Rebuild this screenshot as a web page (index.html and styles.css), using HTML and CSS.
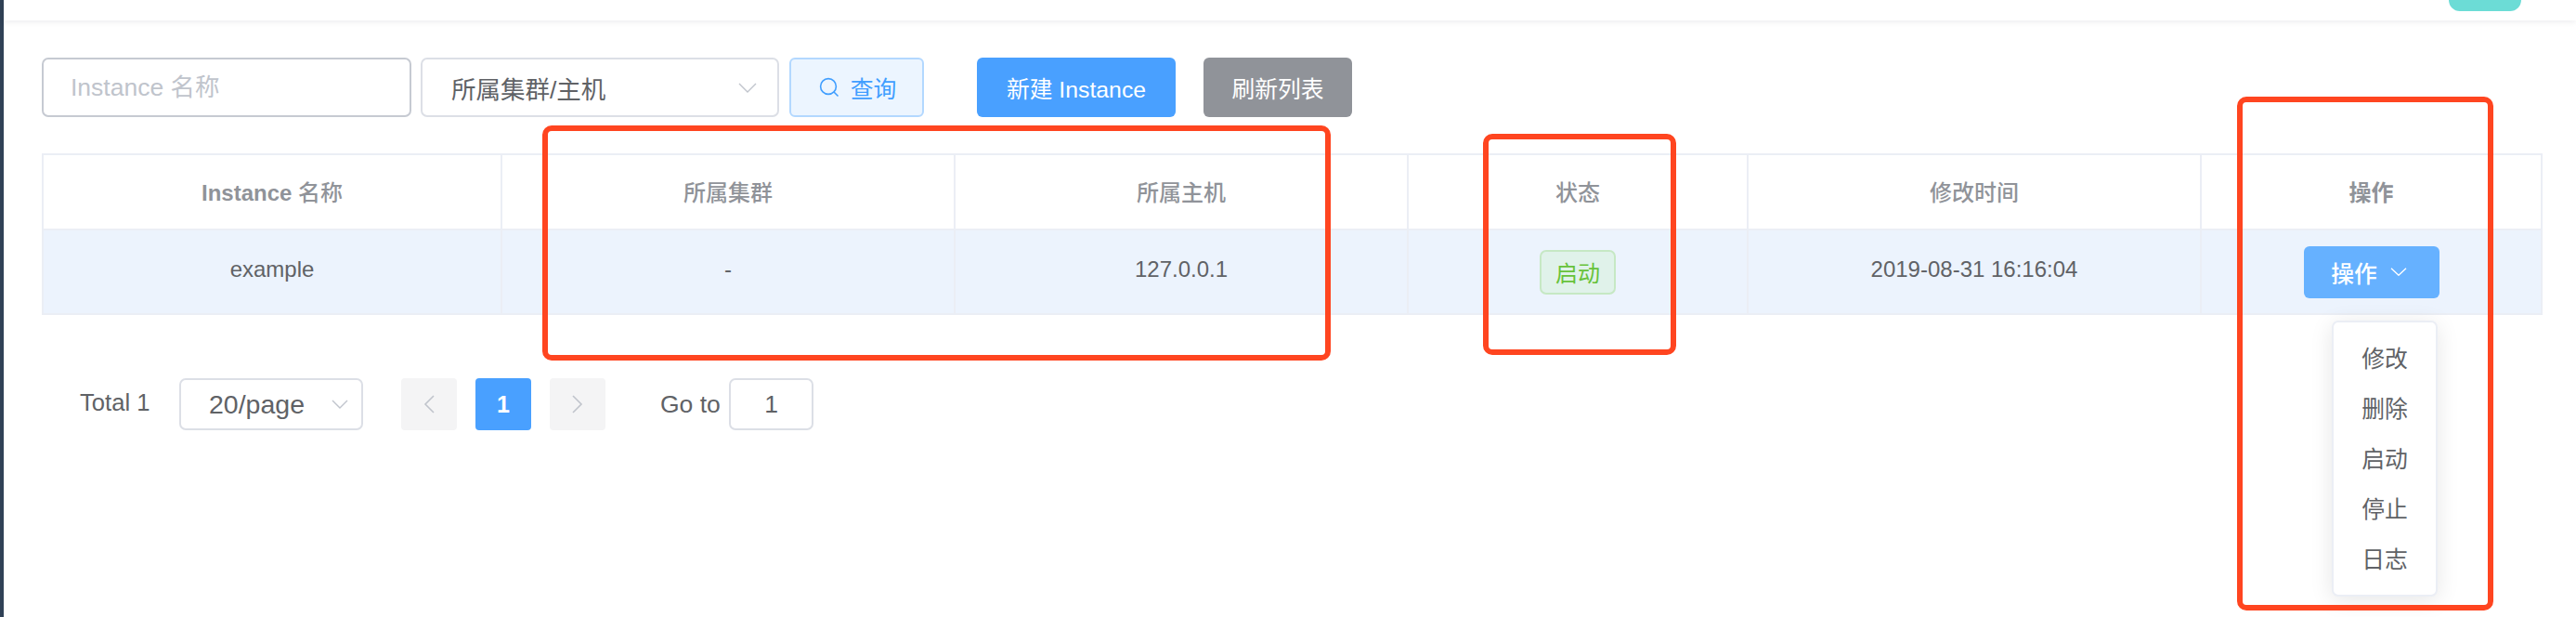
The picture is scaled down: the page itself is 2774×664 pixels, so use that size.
FILE: index.html
```html
<!DOCTYPE html>
<html lang="zh-CN">
<head>
<meta charset="utf-8">
<title>Instance</title>
<link rel="stylesheet" href="styles.css">
</head>
<body>
<aside class="rail"></aside>
<main class="main">
  <header class="topbar"><div class="avatar"></div></header>
  <section class="content">
    <div class="toolbar">
      <input class="name-input" type="text" placeholder="Instance 名称">
      <div class="select cluster-select">
        <span>所属集群/主机</span>
        <svg class="chev chev-lg" viewBox="0 0 20 11"><path d="M1 1l9 9 9-9"/></svg>
      </div>
      <button class="btn btn-query">
        <svg class="search" viewBox="0 0 22 22"><circle cx="10" cy="10" r="8.4"/><path d="M16 16l4.5 4.5"/></svg>
        <span>查询</span>
      </button>
      <button class="btn btn-new">新建 Instance</button>
      <button class="btn btn-refresh">刷新列表</button>
    </div>

    <table class="grid">
      <colgroup>
        <col class="c1"><col class="c2"><col class="c3"><col class="c4"><col class="c5"><col class="c6">
      </colgroup>
      <thead>
        <tr>
          <th><span class="latin">Instance</span> 名称</th><th>所属集群</th><th>所属主机</th><th>状态</th><th>修改时间</th><th class="strong">操作</th>
        </tr>
      </thead>
      <tbody>
        <tr>
          <td class="text-cell">example</td>
          <td class="text-cell">-</td>
          <td class="text-cell">127.0.0.1</td>
          <td><span class="tag">启动</span></td>
          <td class="text-cell">2019-08-31 16:16:04</td>
          <td>
            <button class="btn btn-op"><span>操作</span>
              <svg class="chev chev-op" viewBox="0 0 18 9"><path d="M1 .8l8 7.4 8-7.4"/></svg>
            </button>
          </td>
        </tr>
      </tbody>
    </table>

    <nav class="pager">
      <span class="total">Total 1</span>
      <div class="select size-select">
        <span>20/page</span>
        <svg class="chev chev-sm" viewBox="0 0 18 10"><path d="M1 1l8 8 8-8"/></svg>
      </div>
      <button class="page-btn page-prev"><svg class="arrow" viewBox="0 0 12 20"><path d="M11 1L2 10l9 9"/></svg></button>
      <button class="page-btn page-on">1</button>
      <button class="page-btn"><svg class="arrow" viewBox="0 0 12 20"><path d="M1 1l9 9-9 9"/></svg></button>
      <span class="goto">Go to</span>
      <div class="goto-box">1</div>
    </nav>
  </section>
</main>

<ul class="menu">
  <li>修改</li><li>删除</li><li>启动</li><li>停止</li><li>日志</li>
</ul>

<div class="mark mark-a"></div>
<div class="mark mark-b"></div>
<div class="mark mark-c"></div>
</body>
</html>
```
FILE: styles.css
```css
* { box-sizing: border-box; }
html, body { margin: 0; padding: 0; }
body {
  position: relative;
  display: flex;
  width: 2774px;
  height: 664px;
  overflow: hidden;
  background: #fff;
  font-family: "Liberation Sans", "Noto Sans CJK SC", sans-serif;
  color: #606266;
}
.rail { flex: 0 0 4px; background: #304156; }
.main { flex: 1; min-width: 0; }
.topbar {
  height: 22px;
  display: flex;
  justify-content: flex-end;
  align-items: flex-start;
  padding-right: 59px;
  background: #fff;
  box-shadow: 0 2px 6px rgba(0, 21, 41, .07);
}
.avatar {
  width: 78px;
  height: 12px;
  background: #6cdcd6;
  border-radius: 0 0 22px 22px;
}
.content { padding: 40px 38px 0 41px; }

.toolbar { display: flex; height: 64px; }
.name-input {
  width: 398px;
  height: 64px;
  padding: 0 29px;
  border: 2px solid #c6cad2;
  border-radius: 7px;
  outline: none;
  background: #fff;
  font: 26.5px "Liberation Sans", "Noto Sans CJK SC", sans-serif;
  color: #606266;
}
.name-input::placeholder { color: #c0c4cc; opacity: 1; }
.select {
  display: flex;
  align-items: center;
  justify-content: space-between;
  border: 2px solid #dcdfe6;
  border-radius: 7px;
  background: #fff;
  color: #606266;
}
.cluster-select {
  width: 386px;
  margin-left: 10px;
  padding: 0 22px 0 31px;
  font-size: 26.5px;
}
.chev { display: block; fill: none; stroke: #c0c4cc; stroke-width: 1.4; }
.chev-lg { width: 20px; height: 11px; }
.btn {
  display: inline-flex;
  align-items: center;
  justify-content: center;
  border: 0;
  border-radius: 6px;
  padding: 0;
  font: 24.8px "Liberation Sans", "Noto Sans CJK SC", sans-serif;
  color: #fff;
}
.btn-query {
  width: 145px;
  margin-left: 11px;
  padding-left: 2px;
  gap: 12px;
  border: 2px solid #b3d8ff;
  background: #ecf5ff;
  color: #409eff;
}
.search { width: 22px; height: 22px; fill: none; stroke: #409eff; stroke-width: 1.6; }
.btn-new { width: 214px; margin-left: 57px; background: #49a0ff; }
.btn-refresh { width: 160px; margin-left: 30px; background: #909399; }

.grid {
  width: 2691px;
  margin-top: 39px;
  border-collapse: collapse;
  table-layout: fixed;
  font-size: 24px;
  text-align: center;
}
.c1 { width: 494px; }
.c2, .c3, .c5 { width: 488px; }
.c4 { width: 366px; }
.c6 { width: 367px; }
.grid th, .grid td { border: 2px solid #ebeef5; padding: 0; }
.grid th { height: 81px; padding-bottom: 2px; font-weight: 500; font-size: 24px; color: #909399; }
.grid th.strong { font-weight: 700; }
.latin { font-weight: 700; }
.grid td { height: 91px; background: #ecf3fd; color: #606266; }
.grid td.text-cell { padding-bottom: 5px; }
.tag {
  display: inline-flex;
  align-items: center;
  justify-content: center;
  width: 82px;
  height: 48px;
  border: 2px solid #c6e8c4;
  border-radius: 7px;
  background: #e0f2ea;
  color: #67c23a;
  font-size: 24px;
  vertical-align: middle;
}
.btn-op {
  width: 146px;
  height: 56px;
  padding-right: 5px;
  gap: 14px;
  background: #66b1ff;
  vertical-align: middle;
  font-weight: 500;
}
.chev-op { width: 18px; height: 9px; stroke: #fff; }

.pager { display: flex; align-items: center; height: 56px; margin-top: 68px; padding-left: 41px; }
.total { width: 107px; margin-top: -3px; font-size: 25.6px; }
.size-select { width: 198px; height: 56px; padding: 0 14px 0 30px; font-size: 28.5px; }
.chev-sm { width: 18px; height: 10px; }
.page-btn {
  display: flex;
  align-items: center;
  justify-content: center;
  width: 60px;
  height: 56px;
  margin-left: 20px;
  border: 0;
  border-radius: 4px;
  padding: 0;
  background: #f4f4f5;
  font: 700 25px "Liberation Sans", sans-serif;
}
.page-prev { margin-left: 41px; }
.page-on { background: #49a0ff; color: #fff; }
.arrow { width: 12px; height: 20px; fill: none; stroke: #c0c4cc; stroke-width: 1.6; }
.goto { margin-left: 59px; width: 74px; font-size: 26.5px; }
.goto-box {
  display: flex;
  align-items: center;
  justify-content: center;
  width: 91px;
  height: 56px;
  border: 2px solid #dcdfe6;
  border-radius: 7px;
  font-size: 26.5px;
}

.menu {
  position: absolute;
  left: 2511px;
  top: 345px;
  width: 114px;
  height: 297px;
  margin: 0;
  padding: 13px 0;
  list-style: none;
  background: #fff;
  border: 2px solid #ebeef5;
  border-radius: 7px;
  box-shadow: 0 4px 24px rgba(0, 0, 0, .1);
  font-size: 24.8px;
  text-align: center;
  color: #606266;
}
.menu li { height: 54px; line-height: 54px; }

.mark {
  position: absolute;
  border: 6px solid #ff4520;
  border-radius: 10px;
  pointer-events: none;
}
.mark-a { left: 584px; top: 135px; width: 849px; height: 253px; }
.mark-b { left: 1597px; top: 144px; width: 208px; height: 238px; }
.mark-c { left: 2409px; top: 104px; width: 276px; height: 553px; }
```
